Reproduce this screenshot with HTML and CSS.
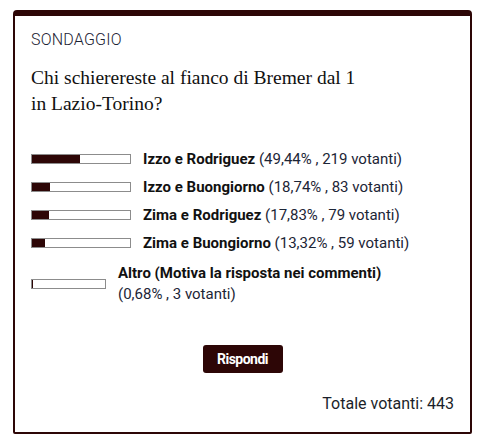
FILE: index.html
```html
<!DOCTYPE html>
<html lang="it">
<head>
<meta charset="utf-8">
<title>Sondaggio</title>
<link rel="stylesheet" href="styles.css">
</head>
<body>
<div class="poll">
  <div class="label">SONDAGGIO</div>
  <h2 class="question">Chi schierereste al fianco di Bremer dal 1<br>in Lazio-Torino?</h2>
  <ul class="options">
    <li class="option">
      <span class="bar"><span class="fill" style="width:49.44%"></span></span>
      <span class="text"><b>Izzo e Rodriguez</b> (49,44% , 219 votanti)</span>
    </li>
    <li class="option">
      <span class="bar"><span class="fill" style="width:18.74%"></span></span>
      <span class="text"><b>Izzo e Buongiorno</b> (18,74% , 83 votanti)</span>
    </li>
    <li class="option">
      <span class="bar"><span class="fill" style="width:17.83%"></span></span>
      <span class="text"><b>Zima e Rodriguez</b> (17,83% , 79 votanti)</span>
    </li>
    <li class="option">
      <span class="bar"><span class="fill" style="width:13.32%"></span></span>
      <span class="text"><b>Zima e Buongiorno</b> (13,32% , 59 votanti)</span>
    </li>
    <li class="option option-wrap">
      <span class="bar bar-short"><span class="fill" style="width:0.68%"></span></span>
      <span class="text"><b>Altro (Motiva la risposta nei commenti)</b><br>(0,68% , 3 votanti)</span>
    </li>
  </ul>
  <div class="actions"><button class="btn">Rispondi</button></div>
  <div class="total">Totale votanti: 443</div>
</div>
</body>
</html>
```
FILE: styles.css
```css
* { box-sizing: border-box; }
body {
  margin: 10px 9px 0 13px;
  background: #fff;
  font-family: Roboto, "Noto Sans", sans-serif;
  color: #1b1f2a;
}
.poll {
  height: 424px;
  border: 2px solid #2d0606;
  border-top-width: 6px;
  border-radius: 4px 4px 2px 2px;
  padding: 14px 16px 0 16px;
}
.label {
  font-size: 16px;
  line-height: 19px;
  font-weight: 300;
  letter-spacing: 0.2px;
  color: #1b2233;
}
.question {
  margin: 16px 0 0;
  font-family: "Liberation Serif", serif;
  font-weight: 400;
  font-size: 19.5px;
  line-height: 26px;
  color: #111;
}
.options {
  list-style: none;
  margin: 28px 0 0;
  padding: 0;
}
.option {
  display: flex;
  align-items: center;
  height: 28px;
  gap: 12px;
}
.option-wrap {
  height: 46px;
  margin-top: 4px;
}
.bar {
  flex: none;
  width: 100px;
  height: 10px;
  border: 1px solid #8c8c8c;
  background: #fff;
  display: block;
}
.bar-short { width: 75px; }
.fill {
  display: block;
  height: 100%;
  background: #2d0606;
}
.text {
  font-size: 15px;
  line-height: 21px;
  color: #1c2536;
}
.text b { color: #111; font-weight: 700; }
.actions {
  display: flex;
  justify-content: center;
  margin-top: 38px;
}
.btn {
  width: 80px;
  height: 28px;
  border: 0;
  border-radius: 3px;
  background: #2d0606;
  color: #fff;
  font-family: Roboto, sans-serif;
  font-weight: 700;
  font-size: 14px;
  letter-spacing: -0.5px;
}
.total {
  text-align: right;
  margin-top: 22px;
  font-size: 16px;
  line-height: 18px;
  color: #1b1f2a;
}
```
